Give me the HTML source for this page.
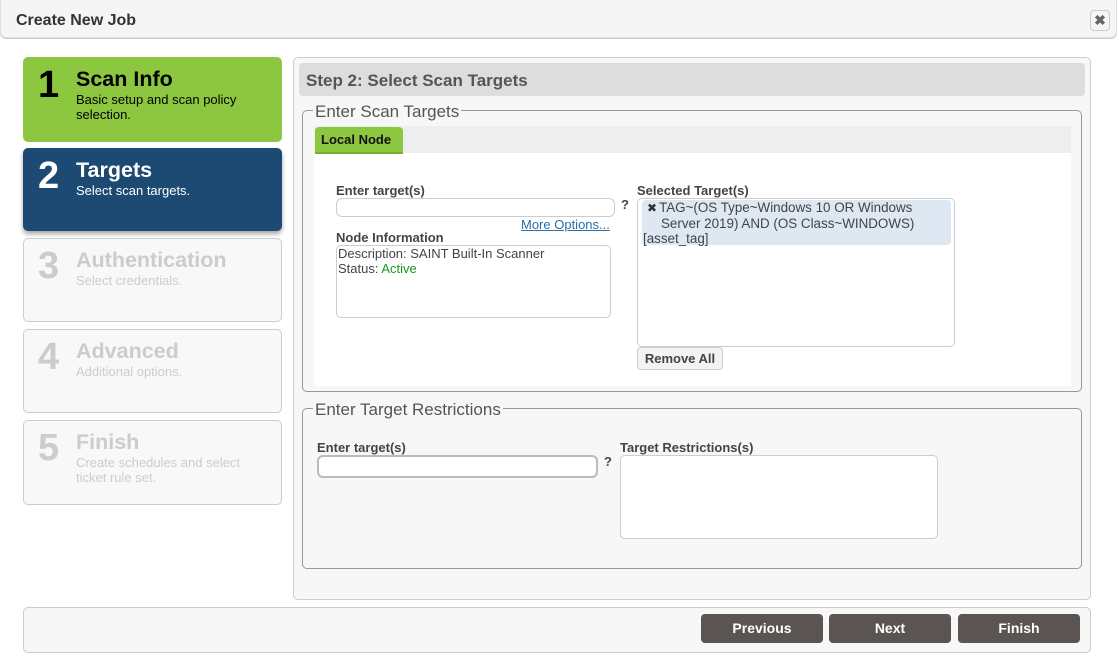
<!DOCTYPE html>
<html><head><style>
*{box-sizing:border-box;margin:0;padding:0}
body{width:1119px;height:663px;background:#fff;font-family:"Liberation Sans",sans-serif;position:relative;overflow:hidden;color:#444}
.a{position:absolute}
.hdr{left:0;top:0;width:1117px;height:38px;background:#f5f5f5;border:1px solid #ddd;border-top:none;border-radius:0 0 6px 6px;box-shadow:0 1px 0 #ccc}
.step{left:23px;width:259px;border-radius:5px;border:1px solid #ccc;background:#f8f8f8;color:#ccc}
.step .n{position:absolute;left:14px;top:7px;font-size:38px;font-weight:bold;line-height:40px}
.step .t{position:absolute;left:52px;top:9px;font-size:21.5px;font-weight:bold;line-height:24px}
.step .d{position:absolute;left:52px;top:34px;font-size:13px;line-height:15px;width:190px}
.lbl{font-size:13px;font-weight:bold;color:#444}
.box{background:#fff;border:1px solid #ccc;border-radius:5px}
.btn{top:614px;width:122px;height:29px;background:#5a5452;color:#fff;font-weight:bold;font-size:14px;border-radius:4px;text-align:center;line-height:29px}
.leg{font-size:17px;color:#555;background:#f7f7f7;padding:0 2px}
</style></head><body>
<div class="a hdr"></div>
<div class="a" style="left:16px;top:12px;font-size:16px;font-weight:bold;color:#333">Create New Job</div>
<div class="a" style="left:1090px;top:10px;width:20px;height:21px;border:1px solid #ccc;border-radius:4px;background:#f5f5f5;text-align:center;font-size:14px;line-height:19px;color:#666;font-weight:bold">✖</div>

<div class="a step" style="top:57px;height:85px;background:#8dc63f;border-color:#8dc63f;color:#000"><div class="n">1</div><div class="t">Scan Info</div><div class="d">Basic setup and scan policy selection.</div></div>
<div class="a step" style="top:148px;height:83px;background:#1d4a72;border-color:#1d4a72;color:#fff;box-shadow:0 3px 5px rgba(0,0,0,.35)"><div class="n">2</div><div class="t">Targets</div><div class="d">Select scan targets.</div></div>
<div class="a step" style="top:238px;height:84px"><div class="n">3</div><div class="t">Authentication</div><div class="d">Select credentials.</div></div>
<div class="a step" style="top:329px;height:84px"><div class="n">4</div><div class="t">Advanced</div><div class="d">Additional options.</div></div>
<div class="a step" style="top:420px;height:85px"><div class="n">5</div><div class="t">Finish</div><div class="d">Create schedules and select ticket rule set.</div></div>

<div class="a" style="left:293px;top:57px;width:798px;height:543px;background:#f7f7f7;border:1px solid #ccc;border-radius:5px"></div>
<div class="a" style="left:299px;top:63px;width:786px;height:33px;background:#ddd;border-radius:4px"></div>
<div class="a" style="left:306px;top:71px;font-size:17px;font-weight:bold;color:#555">Step 2: Select Scan Targets</div>

<div class="a" style="left:302px;top:110px;width:780px;height:282px;border:1px solid #999;border-radius:5px"></div>
<div class="a leg" style="left:313px;top:102px">Enter Scan Targets</div>
<div class="a" style="left:314px;top:126px;width:757px;height:260px;background:#fff"></div>
<div class="a" style="left:314px;top:126px;width:757px;height:27px;background:#eee"></div>
<div class="a" style="left:315px;top:127px;width:88px;height:27px;background:#8dc63f;border-radius:4px 4px 0 0;border-bottom:2px solid #7ab030;font-size:13px;font-weight:bold;color:#111;padding:5px 0 0 6px">Local Node</div>

<div class="a lbl" style="left:336px;top:183px">Enter target(s)</div>
<div class="a box" style="left:336px;top:198px;width:279px;height:19px;border-radius:6px"></div>
<div class="a lbl" style="left:621px;top:197px">?</div>
<div class="a" style="left:521px;top:217px;font-size:13px;color:#2a6fa8;text-decoration:underline">More Options...</div>
<div class="a lbl" style="left:336px;top:230px">Node Information</div>
<div class="a box" style="left:336px;top:245px;width:275px;height:73px;font-size:13px;line-height:15px;padding:0 1px;color:#444">Description: SAINT Built-In Scanner<br>Status: <span style="color:#1a9a1a">Active</span></div>

<div class="a lbl" style="left:637px;top:183px">Selected Target(s)</div>
<div class="a box" style="left:637px;top:198px;width:318px;height:149px"></div>
<div class="a" style="left:642px;top:200px;width:309px;height:45px;background:#dde8f2;border-radius:4px"></div>
<div class="a" style="left:643px;top:200px;font-size:13.4px;line-height:15px;color:#444;width:310px;white-space:nowrap"><span style="color:#333;font-size:12px;margin:0 2px 0 4px">✖</span>TAG~(OS Type~Windows 10 OR Windows<br><span style="padding-left:18px">Server 2019) AND (OS Class~WINDOWS)</span><br>[asset_tag]</div>
<div class="a" style="left:637px;top:347px;width:86px;height:23px;border:1px solid #ccc;border-radius:4px;background:#f3f3f3;font-size:13px;font-weight:bold;text-align:center;line-height:21px;color:#444">Remove All</div>

<div class="a" style="left:302px;top:408px;width:780px;height:161px;border:1px solid #999;border-radius:5px"></div>
<div class="a leg" style="left:313px;top:400px">Enter Target Restrictions</div>
<div class="a lbl" style="left:317px;top:440px">Enter target(s)</div>
<div class="a box" style="left:317px;top:455px;width:281px;height:23px;border:2px solid #bbb;border-radius:6px"></div>
<div class="a lbl" style="left:604px;top:454px">?</div>
<div class="a lbl" style="left:620px;top:440px">Target Restrictions(s)</div>
<div class="a box" style="left:620px;top:455px;width:318px;height:84px"></div>

<div class="a" style="left:23px;top:607px;width:1068px;height:46px;background:#f7f7f7;border:1px solid #ccc;border-radius:5px"></div>
<div class="a btn" style="left:701px">Previous</div>
<div class="a btn" style="left:829px">Next</div>
<div class="a btn" style="left:958px">Finish</div>
</body></html>
